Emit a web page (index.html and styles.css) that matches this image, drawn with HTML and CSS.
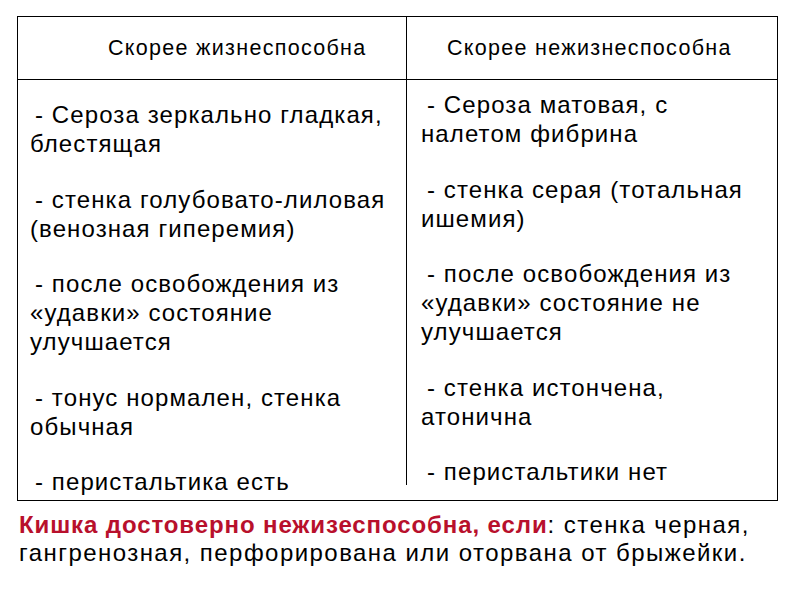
FILE: index.html
```html
<!DOCTYPE html>
<html lang="ru">
<head>
<meta charset="utf-8">
<title>Жизнеспособность кишки</title>
<link rel="stylesheet" href="styles.css">
</head>
<body>
<div class="slide">
  <div class="table">
    <div class="thead">
      <div class="th th-left">Скорее жизнеспособна</div>
      <div class="th th-right">Скорее нежизнеспособна</div>
    </div>
    <div class="tbody">
      <div class="col col-left">
        <p>- Сероза зеркально гладкая,<br>блестящая</p>
        <p>- стенка голубовато-лиловая<br>(венозная гиперемия)</p>
        <p>- после освобождения из<br>«удавки» состояние<br>улучшается</p>
        <p>- тонус нормален, стенка<br>обычная</p>
        <p>- перистальтика есть</p>
      </div>
      <div class="col col-right">
        <p>- Сероза матовая, с<br>налетом фибрина</p>
        <p>- стенка серая (тотальная<br>ишемия)</p>
        <p>- после освобождения из<br>«удавки» состояние не<br>улучшается</p>
        <p>- стенка истончена,<br>атонична</p>
        <p>- перистальтики нет</p>
      </div>
    </div>
  </div>
  <p class="note"><span class="note-em">Кишка достоверно нежизеспособна, если</span>: стенка черная,<br>гангренозная, перфорирована или оторвана от брыжейки.</p>
</div>
</body>
</html>
```

FILE: styles.css
```css
html, body {
  margin: 0;
  padding: 0;
  background: #ffffff;
}

body {
  font-family: "Liberation Sans", Arial, sans-serif;
  color: #000000;
}

.slide {
  width: 794px;
  height: 595px;
  box-sizing: border-box;
  padding: 16px 0 0 17px;
  overflow: hidden;
}

.table {
  width: 761px;
  height: 485px;
  box-sizing: border-box;
  border: 1px solid #000000;
  display: flex;
  flex-direction: column;
}

.thead {
  display: grid;
  grid-template-columns: 388px 1fr;
  height: 63px;
  box-sizing: border-box;
  border-bottom: 1px solid #000000;
}

.th {
  font-size: 21.5px;
  line-height: 62px;
  letter-spacing: 1.3px;
  white-space: nowrap;
}

.th-left {
  padding-left: 90px;
}

.th-right {
  padding-left: 40px;
  border-left: 1px solid #000000;
}

.tbody {
  flex: 1;
  display: grid;
  grid-template-columns: 388px 1fr;
  align-items: start;
}

.col p {
  margin: 0 0 26.5px;
  font-size: 24px;
  line-height: 29px;
  letter-spacing: 1.1px;
  white-space: nowrap;
}

.col-left {
  padding: 20px 0 0 12px;
}

.col-left p {
  text-indent: 5px;
}

.col-right {
  height: 405px;
  box-sizing: border-box;
  border-left: 1px solid #000000;
  padding: 10px 0 0 14px;
}

.col-right p {
  text-indent: 6px;
}

.note {
  margin: 10px 0 0 2px;
  font-size: 24px;
  line-height: 28px;
  letter-spacing: 1.45px;
  white-space: nowrap;
}

.note-em {
  color: #b8102c;
  font-weight: bold;
  letter-spacing: 0.9px;
}
```
